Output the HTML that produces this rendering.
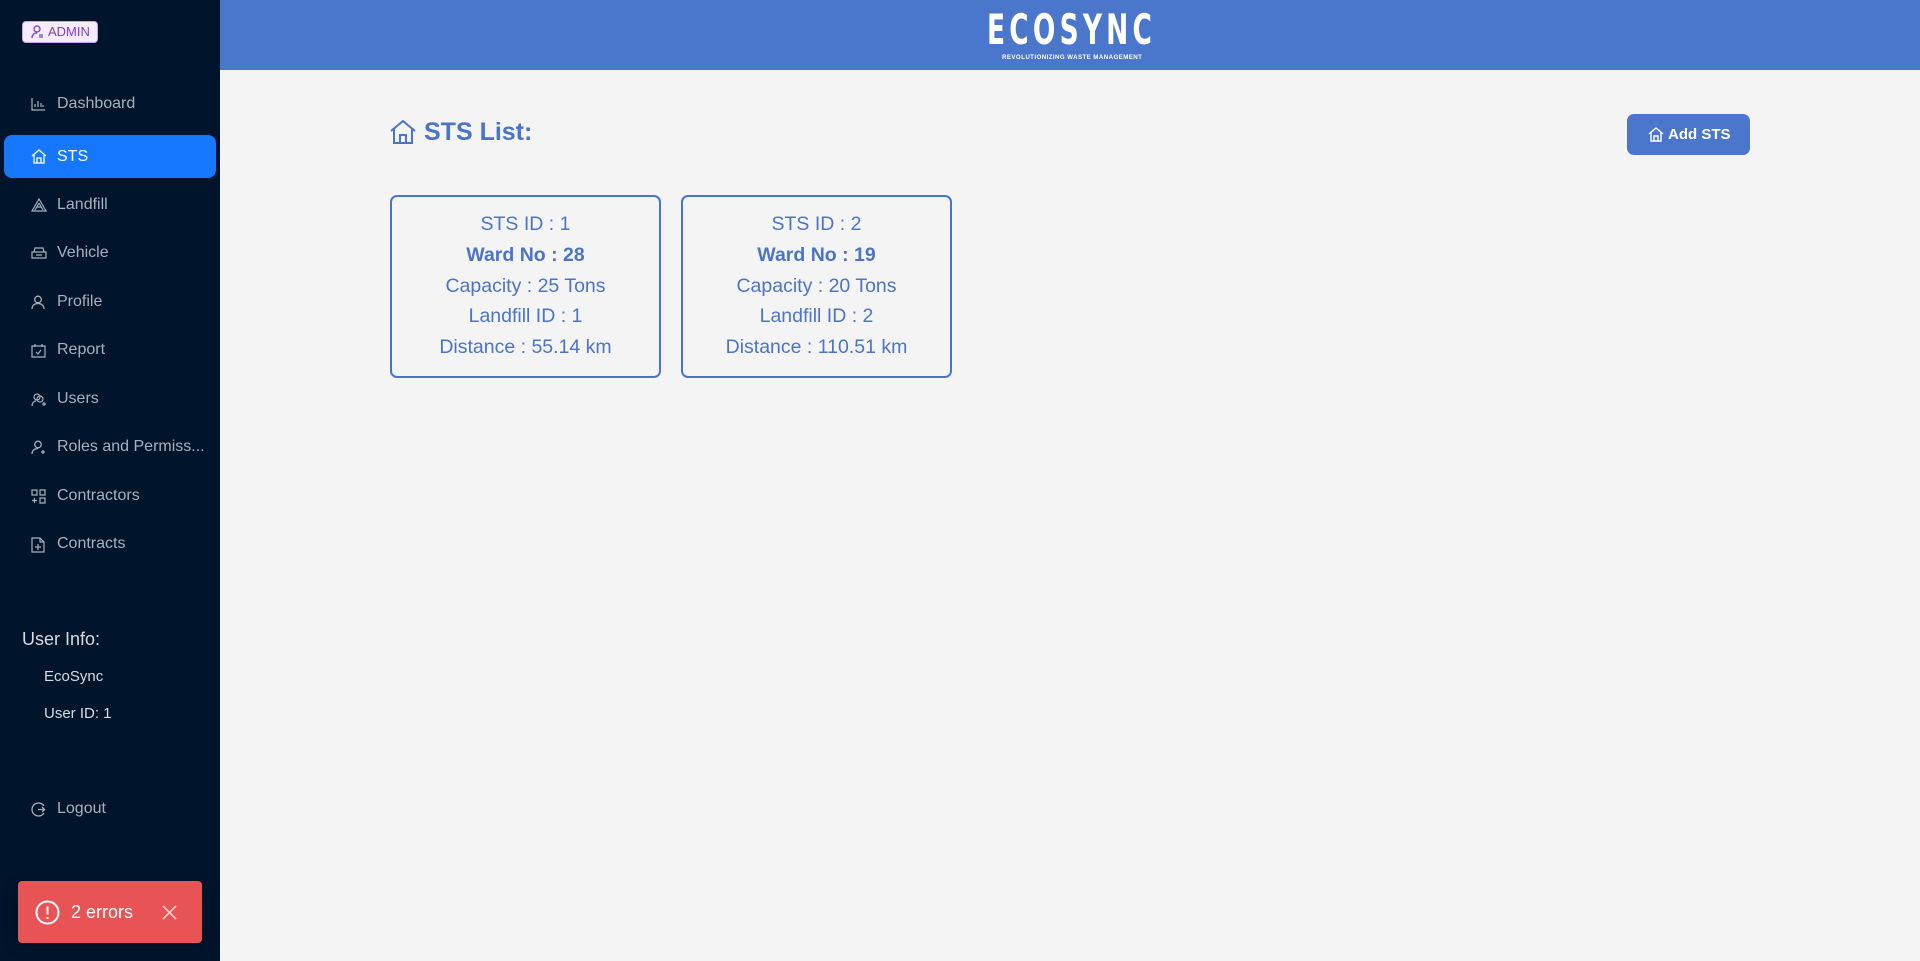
<!DOCTYPE html>
<html><head><meta charset="utf-8"><style>
*{box-sizing:border-box;margin:0;padding:0}
body{width:1920px;height:961px;overflow:hidden;background:#f4f4f4;font-family:"Liberation Sans",sans-serif;position:relative}
.side{position:absolute;left:0;top:0;width:220px;height:961px;background:#00142b}
.badge{position:absolute;left:22px;top:21px;width:76px;height:22px;background:#f6ecfd;border:1px solid #c9a5ef;border-radius:4px;color:#7a3fd0;font-size:13px;line-height:20px;padding-left:25px}
.badge svg{position:absolute;left:8px;top:3px}
.nav{position:absolute;left:0;width:220px;height:40px;color:#a8b0ba;font-size:16px;line-height:40px}
.nav span{position:absolute;left:57px}
.nav svg{position:absolute;left:31px;top:13px}
.nav.act{left:4px;width:212px;background:#1677ff;border-radius:8px;color:#fff}
.nav.act span{left:53px}.nav.act svg{left:27px}
.ui{position:absolute;color:#d8dce2}
.hdr{position:absolute;left:220px;top:0;width:1700px;height:70px;background:#4a76cc}
.logo{position:absolute;left:767px;top:7px;color:#fff;font-size:42px;letter-spacing:6px;font-family:"DejaVu Sans Condensed","Liberation Sans Narrow",sans-serif;font-weight:bold;transform:scaleX(.7);transform-origin:left;line-height:46px}
.tag{position:absolute;left:782px;top:54px;color:#fff;font-size:6.2px;font-weight:bold;letter-spacing:.4px;white-space:nowrap}
.title{position:absolute;left:389px;top:117px;color:#4a74c9;font-size:25px;font-weight:bold;padding-left:35px;line-height:30px}
.title svg{position:absolute;left:0;top:2px}
.btn{position:absolute;left:1627px;top:114px;width:123px;height:41px;background:#4a76cc;border-radius:7px;color:#fff;font-weight:bold;font-size:15px;line-height:41px;padding-left:41px}
.btn svg{position:absolute;left:21px;top:13px}
.card{position:absolute;top:195px;width:271px;height:183px;border:2px solid #4a74c9;border-radius:7px;color:#4a74c9;font-size:19.5px;text-align:center;padding-top:12px}
.card div{height:30.8px;line-height:30.8px}
.toast{position:absolute;left:18px;top:881px;width:184px;height:62px;background:#e85356;border-radius:4px;color:#fff;font-size:18px;line-height:62px;padding-left:53px;box-shadow:0 4px 14px rgba(0,0,0,.25)}
</style></head><body>
<div class="side">
<div class="badge"><svg width="13" height="14" viewBox="0 0 13 14" fill="none" stroke="#7a3fd0" stroke-width="1.3"><circle cx="6" cy="4" r="3"/><path d="M1 13c0-3 2-5 5-5M8 10h4M8 12h4"/></svg>ADMIN</div>
<div class="nav" style="top:84px"><svg width="15" height="14" viewBox="0 0 15 14" fill="none" stroke="#a8b0ba" stroke-width="1.2"><path d="M1 1v12h13M4 10V7M7 10V4M10 10V6M12 10V8"/></svg><span>Dashboard</span></div>
<div class="nav act" style="top:135px;height:43px;line-height:43px"><svg width="16" height="15" viewBox="0 0 16 15" fill="none" stroke="#fff" stroke-width="1.3" style="top:14px"><path d="M1 7L8 1l7 6M3 6v8h10V6M6 14V9h4v5"/></svg><span>STS</span></div>
<div class="nav" style="top:185px"><svg width="16" height="14" viewBox="0 0 16 14" fill="none" stroke="#a8b0ba" stroke-width="1.2"><path d="M8 1L1 13h14zM8 5l-4 7M8 5l4 7M6 9h4"/></svg><span>Landfill</span></div>
<div class="nav" style="top:233px"><svg width="16" height="14" viewBox="0 0 16 14" fill="none" stroke="#a8b0ba" stroke-width="1.2"><path d="M3 6l1-4h8l1 4M1 6h14v6H1zM5 9h6"/></svg><span>Vehicle</span></div>
<div class="nav" style="top:282px"><svg width="14" height="15" viewBox="0 0 14 15" fill="none" stroke="#a8b0ba" stroke-width="1.3"><circle cx="7" cy="4.5" r="3.3"/><path d="M1 14c0-3.5 2.5-5.5 6-5.5s6 2 6 5.5"/></svg><span>Profile</span></div>
<div class="nav" style="top:330px"><svg width="15" height="15" viewBox="0 0 15 15" fill="none" stroke="#a8b0ba" stroke-width="1.2"><path d="M1 3h13v11H1zM4 1v3M11 1v3M5 9l2 2 3-4"/></svg><span>Report</span></div>
<div class="nav" style="top:379px"><svg width="15" height="15" viewBox="0 0 15 15" fill="none" stroke="#a8b0ba" stroke-width="1.2"><circle cx="6" cy="5" r="3"/><circle cx="9" cy="7" r="3"/><path d="M1 14c0-3 2-5 4-5M11 12h4M13 10v4"/></svg><span>Users</span></div>
<div class="nav" style="top:427px"><svg width="15" height="15" viewBox="0 0 15 15" fill="none" stroke="#a8b0ba" stroke-width="1.3"><circle cx="7" cy="4.5" r="3.3"/><path d="M1 14c0-3.5 2.5-5.5 6-5.5M10 12h4M12 10v4"/></svg><span>Roles and Permiss...</span></div>
<div class="nav" style="top:476px"><svg width="15" height="15" viewBox="0 0 15 15" fill="none" stroke="#a8b0ba" stroke-width="1.2"><path d="M1 1h5v5H1zM9 1h5v5H9zM9 9h5v5H9zM3.5 9v5M1 11.5h5"/></svg><span>Contractors</span></div>
<div class="nav" style="top:524px"><svg width="14" height="16" viewBox="0 0 14 16" fill="none" stroke="#a8b0ba" stroke-width="1.2"><path d="M1 1h8l4 4v10H1zM9 1v4h4M7 7v6M4 10h6"/></svg><span>Contracts</span></div>
<div class="ui" style="left:22px;top:629px;font-size:18px">User Info:</div>
<div class="ui" style="left:44px;top:668px;font-size:15px">EcoSync</div>
<div class="ui" style="left:44px;top:705px;font-size:15px">User ID: 1</div>
<div class="nav" style="top:789px"><svg width="15" height="15" viewBox="0 0 15 15" fill="none" stroke="#a8b0ba" stroke-width="1.3"><path d="M13 4A6.5 6.5 0 1 0 13 11M7 7.5h7M11 5l2.5 2.5L11 10"/></svg><span>Logout</span></div>
<div class="toast"><svg style="position:absolute;left:17px;top:19px" width="25" height="25" viewBox="0 0 25 25" fill="none" stroke="#fff" stroke-width="2"><circle cx="12.5" cy="12.5" r="11"/><path d="M12.5 6.5v8M12.5 17v2"/></svg>2 errors<svg style="position:absolute;left:144px;top:24px" width="15" height="15" viewBox="0 0 15 15" stroke="#f8c8c8" stroke-width="1.8"><path d="M1 1l13 13M14 1L1 14"/></svg></div>
</div>
<div class="hdr"><div class="logo">ECOSYNC</div><div class="tag">REVOLUTIONIZING WASTE MANAGEMENT</div></div>
<div class="title"><svg width="28" height="26" viewBox="0 0 28 26" fill="none" stroke="#4a74c9" stroke-width="2"><path d="M2 12L14 2l12 10M5 10v14h18V10M11 24v-8h6v8"/></svg>STS List:</div>
<div class="btn"><svg width="16" height="15" viewBox="0 0 16 15" fill="none" stroke="#fff" stroke-width="1.4"><path d="M1 7L8 1l7 6M3 6v8h10V6M6 14V9h4v5"/></svg>Add STS</div>
<div class="card" style="left:390px"><div>STS ID : 1</div><div style="font-weight:bold">Ward No : 28</div><div>Capacity : 25 Tons</div><div>Landfill ID : 1</div><div>Distance : 55.14 km</div></div>
<div class="card" style="left:681px"><div>STS ID : 2</div><div style="font-weight:bold">Ward No : 19</div><div>Capacity : 20 Tons</div><div>Landfill ID : 2</div><div>Distance : 110.51 km</div></div>
</body></html>
